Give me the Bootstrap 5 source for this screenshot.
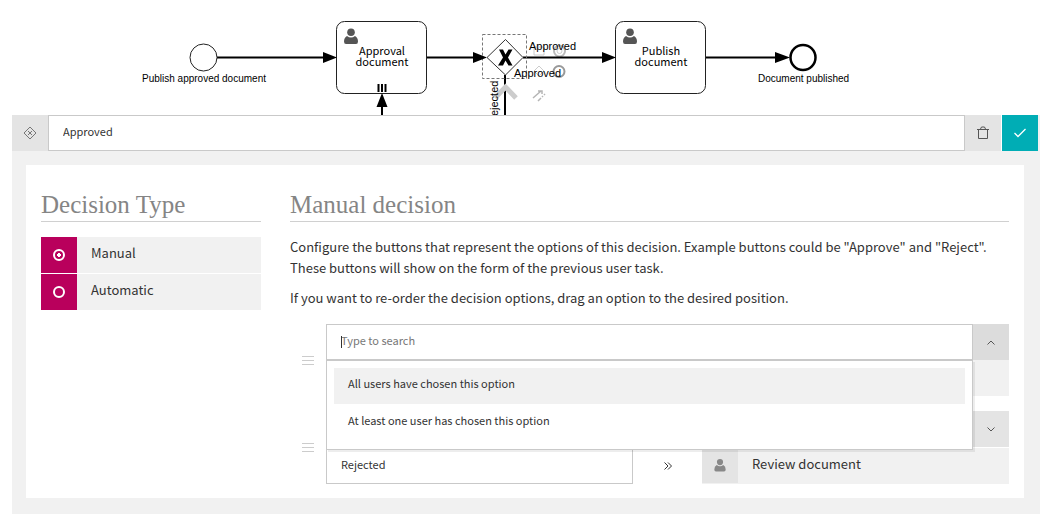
<!DOCTYPE html>
<html lang="en">
<head>
<meta charset="utf-8">
<meta name="viewport" content="width=device-width, initial-scale=1">
<title>Decision settings</title>
<link href="https://cdn.jsdelivr.net/npm/bootstrap@5.3.0/dist/css/bootstrap.min.css" rel="stylesheet">
<style>
  :root { --ui: "Noto Sans CJK JP", "Noto Sans", sans-serif; --edge: #c9c9c9; --soft: #f1f1f1; --tile: #e4e4e4; }
  body { font-family: var(--ui); font-size: 13px; line-height: 21px; color: #333; background: #fff; }
  .diagram { display: block; width: 100%; height: auto; }
  .diagram text { font-family: "Liberation Sans", sans-serif; font-size: 11px; }
  .diagram .event-name { font-size: 10px; }
  .diagram .task-name { font-family: var(--ui); font-size: 11px; }
  .editor { margin: 0 4px 2px 12px; padding-bottom: 16px; background: var(--soft); }
  .title-bar { padding-right: 2px; background: linear-gradient(to left, var(--soft) 2px, #fff 2px); }
  .tile { width: 36px; height: 36px; flex: none; display: flex; align-items: center; justify-content: center; background: var(--tile); border: 0; padding: 0; }
  .field { height: 36px; min-width: 0; border: 1px solid var(--edge); border-radius: 0; padding: 0 14px 4px; font-size: 11px; color: #333; background: #fff; outline: 0; }
  .field::placeholder { color: #777; opacity: 1; }
  .tile-save { background: #00adb5; margin-left: 1px; }
  .tile-open { background: #dcdcdc; }
  .sheet { background: #fff; margin: 14px 16px 0 14px; padding: 23px 15px 14px; gap: 29px; }
  .types { width: 220px; flex: none; }
  .section-title { font-family: "Roboto Slab", "Liberation Serif", serif; font-weight: 100; font-size: 25px; line-height: 33px; color: #858585; border-bottom: 1px solid #d0d0d0; margin: 0 0 14px; }
  .types .section-title { margin-bottom: 15px; }
  .choice { background: var(--soft); margin-bottom: 1px; cursor: pointer; }
  .choice .tile { background: #b9005c; }
  .choice input { appearance: none; width: 12px; height: 12px; border: 2px solid #fff; border-radius: 50%; margin: 0; }
  .choice input:checked { background: radial-gradient(circle, #fff 2px, transparent 2px); }
  .choice-name { padding: 5px 14px 10px; }
  .intro { margin: 0 0 9px; }
  .options { margin-top: 16px; }
  .option { gap: 12px; padding-left: 12px; margin-bottom: 15px; }
  .option:last-child { margin-bottom: 0; }
  .grip { width: 12px; height: 9px; flex: none; }
  .target { background: var(--soft); height: 36px; }
  .route { margin-top: 1px; }
  .route .tile { height: 35px; }
  .route .arrow-gap { width: 69px; flex: none; display: flex; align-items: center; justify-content: center; }
  .option-name { width: 307px; }
  .caret { left: 15px; top: 12px; width: 1px; height: 12px; background: #333; }
  .menu { left: 0; right: 36px; top: 36px; background: #fff; border: 1px solid var(--edge); padding: 7px 7px 8px; box-shadow: 2px 2px 0 rgba(0,0,0,.07); z-index: 2; }
  .menu button { display: block; width: 100%; height: 36px; border: 0; background: #fff; text-align: left; padding: 0 14px 5px; font-size: 11px; color: #333; }
  .menu button + button { margin-top: 1px; }
  .menu .current { background: var(--soft); }
</style>
</head>
<body>
<svg class="diagram" viewBox="0 0 1044 115" role="img" aria-label="Approval process">
  <defs>
    <g id="person"><circle cx="7" cy="3.800" r="3.800"/><path d="M3 7.500 Q7 10.500 11 7.500 Q14 9 14 13 Q14 15.500 12 15.500 H2 Q0 15.500 0 13 Q0 9 3 7.500Z"/></g>
  </defs>
  <g fill="none" stroke="#ccc" stroke-width="2">
    <path d="M534 47 h10 v8 h-10z M534 71 l5 -5 5 5 -5 5z" stroke-width="1"/>
    <circle cx="559.500" cy="51" r="5.500" stroke="#bbb"/><circle cx="559.500" cy="51" r="2.500" stroke-width="1"/><circle cx="559" cy="71.500" r="5.500" stroke="#999"/>
    <path d="M533 98 l8 -7 m-3 0 h4 v3 M538 101 l3 -3 m1 -1 l1 -1 m1 -1 l1 -1" stroke="#b5b5b5" stroke-width="1.500"/>
  </g>
  <g stroke="#000" fill="none">
    <path d="M217 57.500H325M427 57.500H475M523 57.500H604M706 57.500H777M505 75V115M382 115V105" stroke-width="2"/>
    <circle cx="203.500" cy="57.500" r="13.500" stroke="#222"/>
    <circle cx="803" cy="57.500" r="12.500" stroke-width="2.500"/>
    <rect x="336.500" y="21.500" width="90" height="72" rx="8" stroke="#222"/>
    <rect x="615.500" y="21.500" width="90" height="72" rx="8" stroke="#222"/>
    <path d="M505.500 39.500L523 57.500L505.500 75L487 57.500Z" stroke="#333" fill="#fff"/>
    <path d="M378.500 84v8M382 84v8M385.500 84v8" stroke-width="2"/>
    <rect x="482.500" y="34.500" width="44" height="44" stroke="#777" stroke-dasharray="3 2"/>
  </g>
  <path d="M323 52L337 57.500L323 63ZM473 52L487 57.500L473 63ZM602 52L616 57.500L602 63ZM775 52L790 57.500L775 63ZM376.500 107L382 93L387.500 107Z"/>
  <path d="M499 49.500h4l2.500 5 3-5h4l-4.500 8 4.500 8h-4l-3-5-2.500 5h-5l5-8Z"/>
  <path d="M495 98L505.500 87L516 98" fill="none" stroke="#ccc" stroke-width="5"/>
  <use href="#person" x="344" y="28.500" fill="#555"/>
  <use href="#person" x="623" y="28.500" fill="#555"/>
  <text class="event-name" x="142" y="82">Publish approved document</text>
  <text class="event-name" x="758" y="82">Document published</text>
  <text x="529" y="50">Approved</text>
  <text x="514" y="77">Approved</text>
  <text transform="translate(498 124) rotate(-90)">Rejected</text>
  <g text-anchor="middle">
    <text class="task-name" x="382" y="55">Approval</text>
    <text class="task-name" x="382" y="66">document</text>
    <text class="task-name" x="661" y="55">Publish</text>
    <text class="task-name" x="661" y="66">document</text>
  </g>
</svg>

<main class="editor">
  <div class="title-bar d-flex">
    <span class="tile"><svg width="14" height="14" viewBox="0 0 14 14" fill="none" stroke="#777"><path d="M7 1L13 7L7 13L1 7ZM5 5l4 4M9 5l-4 4"/></svg></span>
    <input class="field flex-grow-1" type="text" value="Approved" aria-label="Name">
    <button class="tile" type="button" aria-label="Delete"><svg width="12" height="14" viewBox="0 0 12 14" fill="none" stroke="#555"><path d="M0 3.500H12M3.500 3L4.500 1H7.500L8.500 3M1.500 4V12.500H10.500V4"/></svg></button>
    <button class="tile tile-save" type="button" aria-label="Save"><svg width="12" height="10" viewBox="0 0 12 10" fill="none" stroke="#fff" stroke-width="1.300"><path d="M.5 5L4 8.500L11.500 1"/></svg></button>
  </div>
  <div class="sheet d-flex">
    <section class="types">
      <h2 class="section-title">Decision Type</h2>
      <label class="choice d-flex"><span class="tile"><input type="radio" name="type" checked></span><span class="choice-name">Manual</span></label>
      <label class="choice d-flex"><span class="tile"><input type="radio" name="type"></span><span class="choice-name">Automatic</span></label>
    </section>
    <section class="flex-grow-1">
      <h2 class="section-title">Manual decision</h2>
      <p class="intro">Configure the buttons that represent the options of this decision. Example buttons could be "Approve" and "Reject". These buttons will show on the form of the previous user task.</p>
      <p class="intro">If you want to re-order the decision options, drag an option to the desired position.</p>
      <div class="options">
        <div class="option d-flex align-items-center">
          <svg class="grip" viewBox="0 0 12 9" stroke="#ccc"><path d="M0 .5H12M0 4.500H12M0 8.500H12"/></svg>
          <div class="flex-grow-1 position-relative">
            <div class="d-flex">
              <input class="field flex-grow-1" type="text" placeholder="Type to search" aria-label="Condition">
              <button class="tile tile-open" type="button" aria-label="Close list"><svg width="8" height="5" viewBox="0 0 8 5" fill="none" stroke="#555"><path d="M.5 4.500L4 1L7.500 4.500"/></svg></button>
            </div>
            <span class="caret position-absolute"></span>
            <div class="target"></div>
            <div class="menu position-absolute">
              <button class="current" type="button">All users have chosen this option</button>
              <button type="button">At least one user has chosen this option</button>
            </div>
          </div>
        </div>
        <div class="option d-flex align-items-center">
          <svg class="grip" viewBox="0 0 12 9" stroke="#ccc"><path d="M0 .5H12M0 4.500H12M0 8.500H12"/></svg>
          <div class="flex-grow-1">
            <div class="d-flex">
              <input class="field flex-grow-1" type="text" aria-label="Condition">
              <button class="tile" type="button" aria-label="Open list"><svg width="8" height="5" viewBox="0 0 8 5" fill="none" stroke="#555"><path d="M.5 .5L4 4L7.500 .5"/></svg></button>
            </div>
            <div class="route d-flex">
              <input class="field option-name" type="text" value="Rejected" aria-label="Option name">
              <span class="arrow-gap"><svg width="8" height="8" viewBox="0 0 8 8" fill="none" stroke="#333"><path d="M.5 .5L4 4L.5 7.500M4 .5L7.500 4L4 7.500"/></svg></span>
              <span class="target d-flex flex-grow-1"><span class="tile"><svg width="12" height="13" viewBox="0 0 14 16" fill="#888"><use href="#person"/></svg></span><span class="choice-name">Review document</span></span>
            </div>
          </div>
        </div>
      </div>
    </section>
  </div>
</main>
<script src="https://cdn.jsdelivr.net/npm/bootstrap@5.3.0/dist/js/bootstrap.bundle.min.js"></script>
</body>
</html>
